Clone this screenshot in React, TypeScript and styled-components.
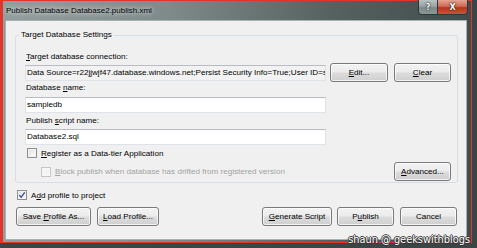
import styled, { createGlobalStyle } from "styled-components";

const GlobalStyle = createGlobalStyle`
  html, body { margin: 0; padding: 0; }
  body {
    background: #3a4444;
    font-family: "Liberation Sans", Arial, sans-serif;
    font-size: 8.1px;
    color: #000;
  }
`;

const Screen = styled.div`
  position: relative;
  width: 477px;
  height: 248px;
  background: #3b4545;
  overflow: hidden;
`;

const Window = styled.div`
  width: 472px;
  height: 243px;
  box-sizing: border-box;
  border: 1px solid #e2342b;
  border-left-width: 3px;
  background: linear-gradient(90deg, #939d9d 0%, #7f8b8b 35%, #56625f 70%, #414d4d 100%);
  display: flex;
  flex-direction: column;
`;

const TitleBar = styled.div`
  height: 19px;
  display: flex;
  justify-content: space-between;
  align-items: flex-start;
  padding-left: 3px;
  padding-right: 3px;
`;

const Title = styled.div`
  line-height: 19px;
  font-size: 8px;
  color: #000;
  text-shadow: 0 0 4px rgba(255, 255, 255, 0.9), 0 0 8px rgba(255, 255, 255, 0.6);
`;

const Caption = styled.div`
  display: flex;
  margin-top: -1px;
`;

const CaptionButton = styled.div<{ $close?: boolean }>`
  width: ${(p) => (p.$close ? 30 : 20)}px;
  height: 15px;
  box-sizing: border-box;
  border: 1px solid #2f3838;
  border-top: none;
  border-left-width: ${(p) => (p.$close ? 0 : 1)}px;
  border-radius: ${(p) => (p.$close ? "0 0 4px 0" : "0 0 0 4px")};
  background: ${(p) =>
    p.$close
      ? "linear-gradient(180deg, #e4a493 0%, #d06a55 45%, #b8341f 55%, #c9553c 100%)"
      : "linear-gradient(180deg, #b9c3c3 0%, #98a4a4 45%, #7d8a8a 55%, #8c9898 100%)"};
  display: flex;
  align-items: center;
  justify-content: center;
  color: #fff;
  font-family: "DejaVu Sans", sans-serif;
  font-weight: bold;
  font-size: 8px;
  text-shadow: 0 0 2px #222, 0 0 1px #000;
`;

const FrameBody = styled.div`
  flex: 1;
  display: flex;
  min-width: 0;
  padding: 0 4px 2px 2px;
`;

const Client = styled.div`
  flex: 1;
  min-width: 0;
  box-sizing: border-box;
  background: #f0f0f0;
  border: 1px solid #a6b1b1;
  display: flex;
  flex-direction: column;
`;

const Group = styled.fieldset`
  margin: 8px 8px 0 9px;
  padding: 0;
  min-width: 0;
  border: 1px solid #d5dfe5;
  border-radius: 3px;
`;

const Legend = styled.legend`
  margin-left: 3px;
  padding: 0 2px;
  line-height: 12px;
`;

const GroupBody = styled.div`
  padding: 10px 6px 1px 9px;
  display: flex;
  flex-direction: column;
`;

const Label = styled.div<{ $gap?: number }>`
  line-height: 12px;
  padding-left: 1px;
  margin-top: ${(p) => p.$gap ?? 0}px;
`;

const Row = styled.div<{ $gap?: number }>`
  display: flex;
  align-items: center;
  height: 19px;
  min-width: 0;
  margin-top: ${(p) => p.$gap ?? 0}px;
`;

const TextBox = styled.div<{ $readOnly?: boolean; $width?: number; $gap?: number }>`
  box-sizing: border-box;
  height: 16px;
  width: ${(p) => (p.$width ? `${p.$width}px` : "auto")};
  flex: ${(p) => (p.$width ? "none" : "1 1 0")};
  min-width: 0;
  margin-top: ${(p) => p.$gap ?? 0}px;
  margin-right: ${(p) => (p.$readOnly ? 4 : 0)}px;
  border: 1px solid #dde3e9;
  border-top-color: #b9bcc2;
  background: ${(p) => (p.$readOnly ? "#f2f2f2" : "#fff")};
  padding-left: 1px;
  line-height: 14px;
  white-space: nowrap;
  overflow: hidden;
`;

const Button = styled.div<{ $width: number; $left?: number }>`
  box-sizing: border-box;
  flex: none;
  width: ${(p) => p.$width}px;
  height: 19px;
  margin-left: ${(p) => p.$left ?? 0}px;
  border: 1px solid #7a7a7a;
  border-radius: 3px;
  background: linear-gradient(180deg, #f3f3f3 0%, #ebebeb 48%, #dcdcdc 52%, #cfcfcf 100%);
  box-shadow: inset 0 0 0 1px rgba(255, 255, 255, 0.75);
  display: flex;
  align-items: center;
  justify-content: center;
  white-space: nowrap;
`;

const U = styled.span`
  text-decoration: underline;
  text-underline-offset: 1px;
`;

const CheckRow = styled.div<{ $indent: number; $gap?: number; $disabled?: boolean }>`
  display: flex;
  align-items: center;
  height: 12px;
  margin-left: ${(p) => p.$indent}px;
  margin-top: ${(p) => p.$gap ?? 0}px;
  color: ${(p) => (p.$disabled ? "#a2a2a2" : "#000")};
  white-space: nowrap;
`;

const Box = styled.div<{ $disabled?: boolean }>`
  box-sizing: border-box;
  flex: none;
  width: 10px;
  height: 10px;
  margin-right: 4px;
  border: 1px solid ${(p) => (p.$disabled ? "#c6c6c6" : "#8e8f8f")};
  background: ${(p) =>
    p.$disabled ? "#f4f4f4" : "linear-gradient(135deg, #dcdcdc 0%, #f6f6f6 70%, #ffffff 100%)"};
  box-shadow: inset 0 0 0 1px ${(p) => (p.$disabled ? "#f7f7f7" : "#f2f2f2")};
  display: flex;
  align-items: center;
  justify-content: center;
`;

const Spacer = styled.div`
  flex: 1;
`;

const ButtonBar = styled.div`
  display: flex;
  align-items: center;
  height: 19px;
  margin-top: 6px;
  padding: 0 9px 0 10px;
`;

const Watermark = styled.div`
  position: absolute;
  right: 7px;
  bottom: 2px;
  font-family: "DejaVu Sans", Verdana, sans-serif;
  font-size: 9.8px;
  line-height: 12px;
  color: #fff;
  text-shadow: 1px 0 0 #333, -1px 0 0 #333, 0 1px 0 #333, 0 -1px 0 #333;
`;

const Check = () => (
  <svg width="8" height="8" viewBox="0 0 8 8">
    <path d="M1.2 4.2 L3.2 6.2 L6.8 1.4" fill="none" stroke="#3c5592" strokeWidth="1.4" />
  </svg>
);

export default function App() {
  return (
    <Screen>
      <GlobalStyle />
      <Window>
        <TitleBar>
          <Title>Publish Database Database2.publish.xml</Title>
          <Caption>
            <CaptionButton>?</CaptionButton>
            <CaptionButton $close>X</CaptionButton>
          </Caption>
        </TitleBar>
        <FrameBody>
          <Client>
            <Group>
              <Legend>Target Database Settings</Legend>
              <GroupBody>
                <Label>
                  <U>T</U>arget database connection:
                </Label>
                <Row>
                  <TextBox $readOnly>
                    Data Source=r22jjwjf47.database.windows.net;Persist Security Info=True;User ID=sh
                  </TextBox>
                  <Button $width={58}>
                    <span>
                      <U>E</U>dit...
                    </span>
                  </Button>
                  <Button $width={57} $left={6}>
                    <span>
                      <U>C</U>lear
                    </span>
                  </Button>
                </Row>
                <Label>
                  Database <U>n</U>ame:
                </Label>
                <TextBox $width={301} $gap={3}>
                  sampledb
                </TextBox>
                <Label $gap={2}>
                  Publish <U>s</U>cript name:
                </Label>
                <TextBox $width={301} $gap={2}>
                  Database2.sql
                </TextBox>
                <CheckRow $indent={2} $gap={2}>
                  <Box />
                  <span>
                    <U>R</U>egister as a Data-tier Application
                  </span>
                </CheckRow>
                <Row $gap={3}>
                  <CheckRow $indent={16} $disabled>
                    <Box $disabled />
                    <span>
                      <U>B</U>lock publish when database has drifted from registered version
                    </span>
                  </CheckRow>
                  <Spacer />
                  <Button $width={57}>
                    <span>
                      <U>A</U>dvanced...
                    </span>
                  </Button>
                </Row>
              </GroupBody>
            </Group>
            <CheckRow $indent={11} $gap={6}>
              <Box>
                <Check />
              </Box>
              <span>
                A<U>d</U>d profile to project
              </span>
            </CheckRow>
            <ButtonBar>
              <Button $width={75}>
                <span>
                  Save <U>P</U>rofile As...
                </span>
              </Button>
              <Button $width={62} $left={6}>
                <span>
                  <U>L</U>oad Profile...
                </span>
              </Button>
              <Spacer />
              <Button $width={70}>
                <span>
                  <U>G</U>enerate Script
                </span>
              </Button>
              <Button $width={57} $left={5}>
                <span>
                  P<U>u</U>blish
                </span>
              </Button>
              <Button $width={57} $left={6}>
                <span>Cancel</span>
              </Button>
            </ButtonBar>
          </Client>
        </FrameBody>
      </Window>
      <Watermark>shaun @ geekswithblogs</Watermark>
    </Screen>
  );
}
